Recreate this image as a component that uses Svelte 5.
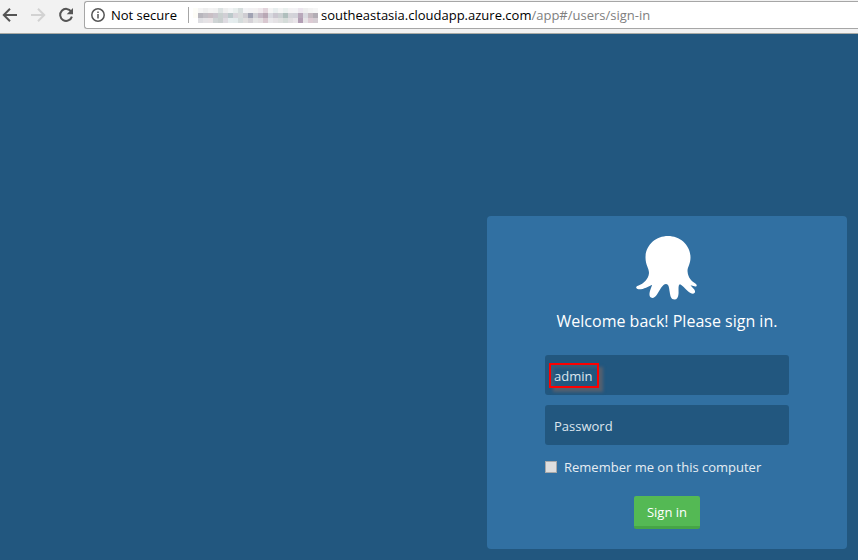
<script>
  let username = $state('admin');
  let password = $state('');
  let remember = $state(false);

  const mosaic = [
    ['#fdfdf8', '#f4f4f4', '#eeeeee', '#f3f3f3', '#f1f1f1', '#dde3e3', '#eeeeee', '#f2f4f5', '#e8eeed', '#d8dfdf', '#f3f3f5', '#f2f1f3', '#f3f1f1', '#efe9ed', '#e3d5dc', '#f4f4f4', '#e8eeee', '#f4f4f4', '#eaf0ee', '#f4f2f4', '#f3f3f5', '#ece6ee', '#eeeeee', '#f3f3f3', '#f6f6f6'],
    ['#fdfcf6', '#b8b6bd', '#c2bfc5', '#c9bfc5', '#cac5cd', '#c9d0cf', '#d1cfd5', '#bcc9cb', '#d9d6dc', '#dadcdc', '#cfcdd2', '#a1a3b3', '#d0d0d5', '#c5b9c5', '#b9a8b5', '#d8d9df', '#cbc7d0', '#cbd0d2', '#b0bfbd', '#d4d4d9', '#d2d2d9', '#b8a8ba', '#d9d9df', '#c5bac1', '#b3adb5'],
    ['#ffffff', '#dedee2', '#e5e3e6', '#e8e2e5', '#cfd4d5', '#c9cfcf', '#dedbe1', '#e6edef', '#e4eced', '#d5dcdc', '#e1dfdf', '#d5d2d7', '#e5e5e5', '#e3dfe1', '#d9c8d0', '#e9e8eb', '#e5e2e5', '#dfe0e0', '#d5dcd9', '#e1dfe2', '#e9e5e9', '#b39fb5', '#e6e3e6', '#ddcbd4', '#d5cdd3']
  ];
</script>

<div class="page">
  <header class="toolbar">
    <nav class="nav" aria-label="Browser">
      <button type="button" class="tool" aria-label="Back">
        <svg viewBox="0 0 16 16"><path d="M15 8H2M8 1.8 1.8 8 8 14.2" /></svg>
      </button>
      <button type="button" class="tool faded" aria-label="Forward" disabled>
        <svg viewBox="0 0 16 16"><path d="M1 8h13M8 1.8 14.2 8 8 14.2" /></svg>
      </button>
      <button type="button" class="tool" aria-label="Reload">
        <svg viewBox="0 0 16 16">
          <path d="M13.2 4.6A6 6 0 1 0 13.9 9.6" />
          <path class="solid" d="M15 1v6.3H8.7z" />
        </svg>
      </button>
    </nav>
    <div class="address">
      <svg class="info" viewBox="0 0 14 14" aria-hidden="true">
        <circle cx="7" cy="7" r="6.2" />
        <path d="M7 6v4.4M7 3.4v1.6" />
      </svg>
      <span>Not secure</span>
      <span class="divider"></span>
      <svg class="mosaic" viewBox="0 0 125 15" shape-rendering="crispEdges" aria-hidden="true">
        {#each mosaic as row, y}
          {#each row as fill, x}
            <rect x={x * 5} y={y * 5} width="5" height="5" {fill} />
          {/each}
        {/each}
      </svg>
      <span class="url">southeastasia.cloudapp.azure.com<span class="path">/app#/users/sign-in</span></span>
    </div>
  </header>

  <main>
    <form class="card" onsubmit={(e) => e.preventDefault()}>
      <svg class="logo" viewBox="0 0 62 64" aria-hidden="true">
        <path d="M32 0C44 0 54.500 9 54.500 21.500C54.500 28 51.500 31 51.500 35C52 42 55.500 45 60 48C61.500 49.500 60.500 51 58.500 50.200L54.500 49.200C56 51.500 58.500 53 59 55C59.500 57.500 57 58.400 54.500 57C50 54.500 47.500 50 44 48.300C41.800 49 42.800 54 42.500 58C42.200 61.500 41 63.500 38.500 63.500C35 63.500 34.300 60 33.700 56C33 52 33 48 30 48C26.500 48 24 54 21 58.500C19 61.500 17 62.500 15 61.600C12.500 60.300 13.500 56 14.800 52.500L16.200 48.700C12 50.500 8 53.500 2.500 53.300C-.5 53-.5 50.500 2 49.700C8 47.500 12.500 43 13 37C13 32 9.500 29 9.500 21.500C9.500 9 20 0 32 0Z" />
      </svg>
      <h1>Welcome back! Please sign in.</h1>
      <div class="field">
        <input type="text" aria-label="Username" autocomplete="off" bind:value={username} />
        <span class="highlight"></span>
      </div>
      <div class="field">
        <input type="password" aria-label="Password" placeholder="Password" bind:value={password} />
      </div>
      <label class="remember">
        <input type="checkbox" bind:checked={remember} />
        Remember me on this computer
      </label>
      <button type="submit" class="submit">Sign in</button>
    </form>
  </main>
</div>

<style>
  :global(body) {
    background: #22577f;
  }
  .page {
    display: flex;
    flex-direction: column;
    min-height: 100vh;
    overflow: hidden;
    font-family: 'Segoe UI', 'Open Sans', 'Noto Sans', sans-serif;
    font-size: 13px;
  }
  .toolbar {
    display: flex;
    align-items: flex-start;
    padding-top: 1px;
    padding-bottom: 4px;
    background: #f2f2f2;
    border-bottom: 1px solid #a9aaa5;
  }
  .nav {
    display: flex;
    align-items: center;
    gap: 12px;
    height: 28px;
    width: 84px;
    padding-left: 2px;
    box-sizing: border-box;
  }
  .tool {
    width: 16px;
    height: 16px;
    padding: 0;
    border: 0;
    background: none;
    color: #555;
  }
  .tool.faded {
    color: #d2d2d2;
  }
  .tool svg {
    display: block;
    fill: none;
    stroke: currentColor;
    stroke-width: 2;
  }
  .tool .solid {
    fill: currentColor;
    stroke: none;
  }
  .address {
    flex: 1;
    display: flex;
    align-items: center;
    height: 28px;
    box-sizing: border-box;
    padding-left: 6px;
    border: 1px solid #a6a6a6;
    border-right: 0;
    border-radius: 3px 0 0 3px;
    background: #fff;
    color: #000;
    white-space: nowrap;
  }
  .info {
    width: 14px;
    height: 14px;
    margin-right: 6px;
    fill: none;
    stroke: #555;
    stroke-width: 1.5;
  }
  .divider {
    width: 1px;
    height: 16px;
    margin: 0 4px 0 11px;
    background: #a6a6a6;
  }
  .mosaic {
    width: 125px;
    height: 15px;
    margin-right: 3px;
  }
  .path {
    color: #808080;
  }
  main {
    flex: 1;
    display: flex;
    justify-content: flex-end;
    align-items: flex-end;
    padding: 11px;
    background: #22577f;
  }
  .card {
    display: flex;
    flex-direction: column;
    align-items: center;
    width: 360px;
    box-sizing: border-box;
    padding: 20px 58px;
    border-radius: 4px;
    background: #3170a2;
    color: #e6edf3;
  }
  .logo {
    width: 62px;
    height: 64px;
    fill: #fff;
  }
  h1 {
    margin: 9px 0 21px;
    font-size: 16px;
    font-weight: 500;
    line-height: 25px;
    color: #fff;
    white-space: nowrap;
  }
  .field {
    position: relative;
    width: 100%;
    margin-bottom: 10px;
  }
  .field input {
    display: block;
    width: 100%;
    height: 40px;
    box-sizing: border-box;
    padding: 2px 9px 0;
    border: 0;
    border-radius: 3px;
    background: #22577f;
    color: #dde6ee;
    font: inherit;
  }
  .field input::placeholder {
    color: #dde6ee;
    opacity: 1;
  }
  .highlight {
    position: absolute;
    left: 4px;
    top: 8px;
    width: 50px;
    height: 25px;
    box-sizing: border-box;
    border: 2px solid #f00;
    box-shadow: 4px 4px 3px #55606f, inset 3px 3px 3px #55606f80;
    clip-path: inset(0 -10px -10px 0);
    pointer-events: none;
  }
  .remember {
    display: flex;
    align-items: center;
    align-self: flex-start;
    gap: 7px;
    height: 24px;
    white-space: nowrap;
  }
  .remember input {
    appearance: none;
    width: 12px;
    height: 12px;
    margin: 0;
    border: 1px solid #a9a9a9;
    background: #dedede;
  }
  .remember input:checked {
    background: #22577f;
  }
  .submit {
    height: 33px;
    margin-top: 17px;
    padding: 2px 13px 0;
    border: 0;
    border-bottom: 3px solid #46a546;
    border-radius: 2px;
    background: #54b954;
    color: #fff;
    font: inherit;
    font-weight: 500;
  }
</style>
